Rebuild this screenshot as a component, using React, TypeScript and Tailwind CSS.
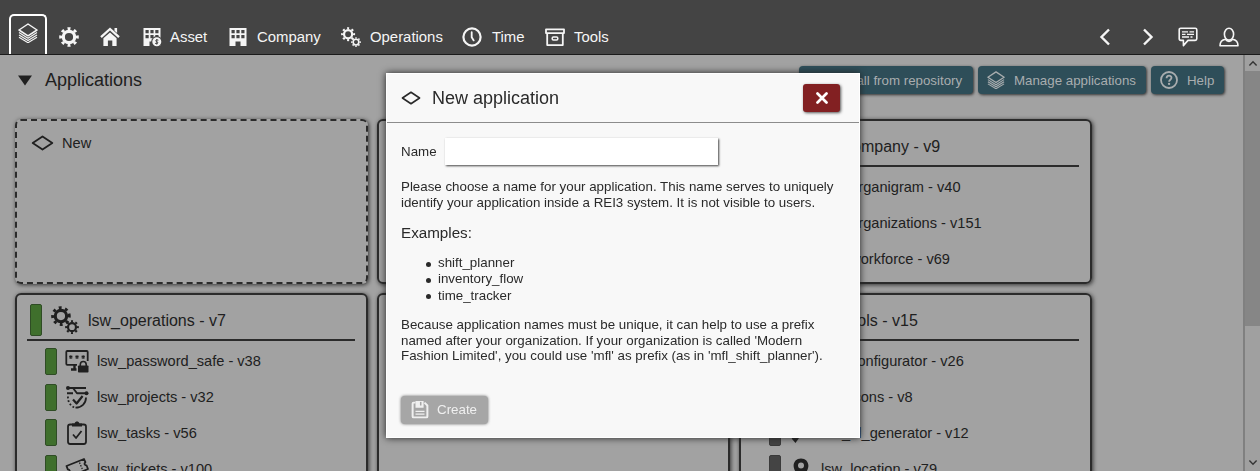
import type { ReactNode } from "react";

type IconProps = { className?: string };

function Svg({ className = "size-5", box = "0 0 20 20", children }: IconProps & { box?: string; children: ReactNode }) {
  return (
    <svg className={`shrink-0 ${className}`} viewBox={box} fill="none" stroke="currentColor" strokeWidth="1.6" strokeLinejoin="round">
      {children}
    </svg>
  );
}

const Layers = ({ className }: IconProps) => (
  <Svg className={className}>
    <path d="M10 1 19 7 10 12.8 1 7Z" strokeWidth="1.5" />
    <path d="M1 9.6 10 15.200l9-5.600M1 12 10 17.500l9-5.500M1 14.300 10 19.700l9-5.400" strokeWidth="1.200" />
  </Svg>
);

function Cog({ x, y, r }: { x: number; y: number; r: number }) {
  const tooth = (2 * Math.PI * r * 0.88) / 16;
  return (
    <g>
      <circle cx={x} cy={y} r={r * 0.58} strokeWidth={r * 0.32} />
      <circle cx={x} cy={y} r={r * 0.85} strokeWidth={r * 0.3} pathLength={tooth * 16} strokeDasharray={`${tooth * 0.9} ${tooth * 1.1}`} strokeDashoffset={tooth * 0.45} />
    </g>
  );
}

const Gear = ({ className }: IconProps) => (
  <Svg className={className}>
    <Cog x={10} y={10} r={9.8} />
  </Svg>
);

const Gears = ({ className }: IconProps) => (
  <Svg className={className}>
    <Cog x={7.1} y={7.2} r={7} />
    <Cog x={15} y={15.1} r={4.9} />
  </Svg>
);

const Home = () => (
  <Svg>
    <path d="M1 10.2 10 2l9 8.2" strokeWidth="2.3" strokeLinejoin="miter" />
    <path d="M14.5 1h2.6v5l-2.6-2.2ZM3.4 11.3 10 5.5l6.6 5.8V19h-4.3v-5.6H7.9V19H3.4Z" fill="currentColor" stroke="none" />
  </Svg>
);

const Building = ({ coin = false }: { coin?: boolean }) => (
  <Svg>
    <path
      fillRule="evenodd"
      d="M1.500 1h17v18h-6v-4.500h-5V19h-6ZM3.500 3v3.300h3.200V3Zm4.900 0v3.300h3.200V3Zm4.900 0v3.300h3.200V3ZM3.500 8v3.300h3.200V8Zm4.900 0v3.300h3.200V8Zm4.900 0v3.300h3.200V8Z"
      fill="currentColor"
      stroke="none"
    />
    {coin && (
      <g>
        <circle cx="14.8" cy="14.6" r="5.6" fill="#444444" stroke="none" />
        <circle cx="14.8" cy="14.8" r="4.5" fill="currentColor" stroke="none" />
        <path d="M16.4 13.2c-2.6-1-3.7.9-1.6 1.6s1.100 2.500-1.700 1.500M14.8 12v5.600" stroke="#444444" strokeWidth="1" />
      </g>
    )}
  </Svg>
);

const Clock = () => (
  <Svg>
    <circle cx="10" cy="10" r="8.6" strokeWidth="2.2" />
    <path d="M9.700 5.200v5l2 3.200" strokeWidth="1.800" strokeLinecap="round" />
  </Svg>
);

const Archive = () => (
  <Svg>
    <path d="M1 2.300h18v3.800H1ZM2.200 6.300v11.800h15.600V6.300" strokeWidth="1.800" />
    <rect x="7.200" y="10" width="5.600" height="2.900" rx="1.200" strokeWidth="1.500" />
  </Svg>
);

const Chat = () => (
  <Svg>
    <path d="M2.800 1.200h14.400q1.600 0 1.600 1.600v9q0 1.600-1.600 1.600H10l-4.600 5.200v-5.200H2.800q-1.600 0-1.600-1.600v-9q0-1.600 1.600-1.600Z" />
    <path d="M4 4.800h6M11.500 4.800H16M4 7.400h3.500M9 7.400h7M4 10h7M12.500 10h2" strokeWidth="1.300" />
  </Svg>
);

const User = () => (
  <Svg>
    <ellipse cx="10" cy="7.200" rx="4.600" ry="5.900" />
    <path d="M6.500 12.300C2.500 13 1 15 1 18.800h18c0-3.800-1.500-5.800-5.500-6.500-1.800 2.800-5.200 2.800-7 0Z" />
  </Svg>
);

const Diamond = ({ className }: IconProps) => (
  <Svg className={className} box="0 0 22 16">
    <path d="M1.200 8 11 1.400 20.800 8 11 14.600Z" strokeWidth="1.800" />
  </Svg>
);

const Help = () => (
  <Svg className="size-[18px]">
    <circle cx="10" cy="10" r="8.900" strokeWidth="2" />
    <path d="M7.300 8c0-3.800 5.500-3.600 5.500-.4 0 2-2.700 2.200-2.700 4.300" strokeWidth="2" />
    <circle cx="10.100" cy="14.300" r="1.300" fill="currentColor" stroke="none" />
  </Svg>
);

const PasswordSafe = () => (
  <Svg className="size-6" box="0 0 24 24">
    <path d="M12 15.800H2.300q-1 0-1-1V3q0-1 1-1h19.400q1 0 1 1v9" strokeWidth="1.800" />
    <path d="M5.800 7.200v3.600M4.200 8.100l3.200 1.800M7.400 8.100 4.200 9.900M12 7.200v3.600M10.400 8.100l3.200 1.800M13.600 8.100l-3.200 1.800M18.200 7.200v3.600M16.600 8.100l3.200 1.800M19.800 8.100l-3.200 1.800" strokeWidth="1.100" transform="translate(0 -1)" />
    <path d="M6 20.500h5.500M9.500 16v4" strokeWidth="2.400" />
    <rect x="13" y="16.500" width="10.500" height="7" rx=".800" fill="currentColor" stroke="none" />
    <path d="M15.300 17v-1.500c0-4 5.900-4 5.900 0V17" strokeWidth="1.600" />
  </Svg>
);

const Projects = () => (
  <Svg className="size-6" box="0 0 24 24">
    <circle cx="3" cy="3" r="2" fill="currentColor" stroke="none" />
    <circle cx="21.500" cy="8.300" r="2" fill="currentColor" stroke="none" />
    <path d="M3 3h18M8 3l4 5.300h9.500M2 8.300h6" strokeWidth="1.900" />
    <path d="M8 14.500l3.600 4 6-7.500" strokeWidth="2.200" />
    <path d="M21 12.500c0 6-4.500 10.200-10.500 10.200" strokeWidth="1.800" />
    <path d="M3 11.500c-.5 5 2.500 9.800 7 11" strokeWidth="1.800" strokeDasharray="1.800 2" />
  </Svg>
);

const Tasks = () => (
  <Svg className="size-6" box="0 0 24 24">
    <rect x="3" y="3.500" width="18" height="19.500" rx="2.200" strokeWidth="1.800" />
    <path d="M7 5.500v-3h2.600c.7-2.600 4.100-2.600 4.800 0H17v3Z" fill="currentColor" stroke="none" />
    <path d="M8 13.500l3 3.500 5.500-7" strokeWidth="1.800" />
  </Svg>
);

const Ticket = () => (
  <Svg className="size-6" box="0 0 24 24">
    <path d="M1.500 9 19 2l1.400 3.200c-1.500 1.200-1 3.200 1.200 3.300L23 12 5.500 19.500 4 16c1.500-1.500.8-3.500-1.200-3.600Z" strokeWidth="1.800" />
    <path d="M14.500 5.500l3 7" strokeWidth="1.300" strokeDasharray="1.500 1.300" />
  </Svg>
);

const Pin = () => (
  <Svg className="size-6" box="0 0 24 24">
    <path fillRule="evenodd" d="M12 1.500c-4.500 0-7.400 3.200-7.400 7.200C4.600 14 12 23.500 12 23.500S19.400 14 19.400 8.700c0-4-2.900-7.200-7.400-7.200Zm0 4a3 3 0 1 1 0 6 3 3 0 0 1 0-6Z" fill="currentColor" stroke="none" />
  </Svg>
);

const Brush = () => (
  <Svg className="size-6" box="0 0 24 24">
    <path d="M2 14h7l1 3-3.500 5L3 18Z" fill="currentColor" stroke="none" />
  </Svg>
);

const Save = () => (
  <Svg className="size-[18px]">
    <path d="M5 1.800H2.800q-1 0-1 1v14.400q0 1 1 1h14.400q1 0 1-1V5L15 1.800" strokeWidth="2.200" />
    <path d="M5 0h9v7.500H5Z" fill="currentColor" stroke="none" />
    <path d="M10.800 1v4" stroke="#a6a6a6" strokeWidth="1.700" />
    <path d="M5 11.500h10M5 14.500h10" strokeWidth="1.300" />
  </Svg>
);

function Chevron({ d, className }: IconProps & { d: string }) {
  return (
    <Svg className={className}>
      <path d={d} strokeWidth="2.400" strokeLinejoin="miter" />
    </Svg>
  );
}

function TopBar() {
  return (
    <header className="flex h-[55px] shrink-0 items-end border-b border-[#1b1b1b] bg-[#444444] text-[14.900px] text-[#f5f5f5]">
      <div className="ml-[9px] flex h-10 w-[38px] justify-center rounded-t-[5px] border-x-2 border-t-2 border-white pt-[7px]">
        <Layers />
      </div>
      <nav className="flex h-[34px] items-center">
        <Gear className="ml-3 size-5" />
        <span className="ml-[21px] flex"><Home /></span>
        <span className="ml-[22px] flex"><Building coin /></span>
        <span className="ml-2 w-[38px]">Asset</span>
        <span className="ml-5 flex"><Building /></span>
        <span className="ml-[9px] w-[63px]">Company</span>
        <Gears className="ml-[21px] size-5" />
        <span className="ml-[9px] w-[71px]">Operations</span>
        <span className="ml-[21px] flex"><Clock /></span>
        <span className="ml-[10px] w-[31px]">Time</span>
        <span className="ml-[22px] flex"><Archive /></span>
        <span className="ml-[9px]">Tools</span>
      </nav>
      <div className="mr-[21px] ml-auto flex h-[34px] items-center">
        <Chevron d="M14 2.500 6.500 10l7.500 7.500" />
        <Chevron className="ml-[23px] size-5" d="M6 2.500 13.500 10 6 17.500" />
        <span className="ml-5 flex"><Chat /></span>
        <span className="ml-[21px] flex"><User /></span>
      </div>
    </header>
  );
}

function ActionButton({ icon, width, children }: { icon?: ReactNode; width: string; children: ReactNode }) {
  return (
    <button className={`flex h-7 items-center rounded-[4px] bg-[#2e4e59] pl-[9px] text-[13.300px] whitespace-nowrap text-[#a9adaf] shadow-[1px_1px_3px_#333] ${width}`}>
      <span className="flex w-[18px]">{icon}</span>
      <span className="ml-[9px] pt-px">{children}</span>
    </button>
  );
}

type Module = { name: string; icon?: ReactNode };
const cardBase = "rounded-[6px] border-2 border-[#2b2b2b] shadow-[1px_1px_4px_#333]";

function ModuleCard({ title, icon, modules, active }: { title: string; icon?: ReactNode; modules: Module[]; active: boolean }) {
  const bar = active ? "bg-[#3f6f2c] border-[#2f4c25]" : "bg-[#444444] border-[#3a3a3a]";
  return (
    <section className={`overflow-hidden pl-[10px] pr-[11px] pt-[3px] ${cardBase}`}>
      <div className="flex h-[43px] items-center border-b-2 border-[#2b2b2b] pl-[3px] pt-[3px]">
        <span className={`h-8 w-3 rounded-[2px] border ${bar}`} />
        <span className="ml-[9px] flex w-[28px]">{icon}</span>
        <h2 className="ml-[9px] pt-[2px] text-[16px] whitespace-nowrap">{title}</h2>
      </div>
      <ul className="flex flex-col pt-[2.500px]">
        {modules.map((m) => (
          <li key={m.name} className="flex h-[35.800px] items-center pl-[18px]">
            <span className={`h-[27px] w-3 rounded-[2px] border ${bar}`} />
            <span className="ml-[8px] flex w-6">{m.icon}</span>
            <span className="ml-2 pt-[2px] text-[14.600px] whitespace-nowrap">{m.name}</span>
          </li>
        ))}
      </ul>
    </section>
  );
}

function Builder() {
  return (
    <main className="min-w-0 flex-1 overflow-hidden">
      <div className="flex h-[50px] items-center pl-[17px]">
        <svg className="h-[11px] w-4" viewBox="0 0 16 11"><path d="M1 .5h14L8 10.500Z" fill="#202020" /></svg>
        <h1 className="ml-3 text-[18px]">Applications</h1>
        <div className="mr-[19px] ml-auto flex gap-[5px]">
          <ActionButton width="w-[174px]">Install from repository</ActionButton>
          <ActionButton width="w-[168px]" icon={<Layers className="size-[18px]" />}>Manage applications</ActionButton>
          <ActionButton width="w-[73px]" icon={<Help />}>Help</ActionButton>
        </div>
      </div>
      <div className="grid grid-cols-[353px_353px_353px] grid-rows-[165px_200px] gap-[9px] pt-[14px] pl-[15px]">
        <section className={`flex border-dashed pt-[12px] pl-[14px] ${cardBase}`}>
          <Diamond className="mt-0.5 h-4 w-[23px]" />
          <span className="ml-2 text-[14.600px] leading-5">New</span>
        </section>
        <section className={cardBase} />
        <ModuleCard active={false} title="lsw_company - v9" modules={[{ name: "lsw_organigram - v40" }, { name: "lsw_organizations - v151" }, { name: "lsw_workforce - v69" }]} />
        <ModuleCard
          active
          title="lsw_operations - v7"
          icon={<Gears className="size-[28px]" />}
          modules={[
            { name: "lsw_password_safe - v38", icon: <PasswordSafe /> },
            { name: "lsw_projects - v32", icon: <Projects /> },
            { name: "lsw_tasks - v56", icon: <Tasks /> },
            { name: "lsw_tickets - v100", icon: <Ticket /> },
          ]}
        />
        <section className={cardBase} />
        <ModuleCard
          active={false}
          title="lsw_tools - v15"
          modules={[
            { name: "lsw_configurator - v26" },
            { name: "lsw_icons - v8" },
            { name: "lsw_dl_generator - v12", icon: <Brush /> },
            { name: "lsw_location - v79", icon: <Pin /> },
          ]}
        />
      </div>
    </main>
  );
}

function ScrollBar() {
  return (
    <aside className="flex w-[17px] flex-col items-center border-l-2 border-[#808080] bg-[#a0a0a0] text-[#353535]">
      <Chevron className="my-[2px] size-3" d="M4 14 10 8l6 6" />
      <div className="h-[255px] w-full bg-[#868686]" />
      <Chevron className="mt-auto mb-[2px] size-3" d="M4 6l6 6 6-6" />
    </aside>
  );
}

function NewApplicationDialog() {
  return (
    <div className="fixed inset-0 flex items-start pt-[73px] pl-[386px]">
      <div role="dialog" className="flex h-[365px] w-[474px] flex-col border border-white bg-[#f8f8f8] text-[13.330px] leading-4 text-[#2a2a2a] shadow-[0_0_7px_#222]">
        <div className="flex h-[49px] items-center border-b border-[#8c8c8c] pr-[19px] pl-[14px]">
          <Diamond className="h-[14px] w-[20px]" />
          <h2 className="ml-[11px] text-[18px]">New application</h2>
          <button aria-label="Close" className="ml-auto flex h-[28px] w-[37px] items-center justify-center rounded-[3px] bg-[#822022] text-white shadow-[1px_1px_3px_#555]">
            <svg className="size-3" viewBox="0 0 12 12"><path d="m1.500 1.500 9 9m0-9-9 9" stroke="currentColor" strokeWidth="2.700" strokeLinecap="round" /></svg>
          </button>
        </div>
        <div className="flex flex-1 flex-col items-start px-[14px] pt-[15px]">
          <label className="flex items-center">
            <span className="w-11">Name</span>
            <input className="h-[27px] w-[273px] bg-white shadow-[1px_1px_2px_#444] outline-none" />
          </label>
          <p className="mt-[14px] whitespace-nowrap">
            Please choose a name for your application. This name serves to uniquely<br />identify your application inside a REI3 system. It is not visible to users.
          </p>
          <h3 className="mt-[14px] text-[15.200px]">Examples:</h3>
          <ul className="mt-[14px] pl-6 leading-[16.300px]">
            {["shift_planner", "inventory_flow", "time_tracker"].map((name) => (
              <li key={name} className="flex items-center">
                <span className="mt-0.5 mr-[7px] ml-px size-[5px] rounded-full bg-[#2a2a2a]" />
                {name}
              </li>
            ))}
          </ul>
          <p className="mt-[13px] leading-[15.800px] whitespace-nowrap">
            Because application names must be unique, it can help to use a prefix<br />named after your organization. If your organization is called 'Modern<br />Fashion Limited', you could use 'mfl' as prefix (as in 'mfl_shift_planner').
          </p>
          <button disabled className="mt-auto mb-[13px] flex h-[28px] w-[87px] items-center rounded-[4px] bg-[#a6a6a6] pl-[10px] text-[#f0f0f0] shadow-[0_0_3px_#666]">
            <Save />
            <span className="ml-2">Create</span>
          </button>
        </div>
      </div>
    </div>
  );
}

export default function App() {
  return (
    <div className="flex h-[471px] w-[1260px] flex-col overflow-hidden bg-[#a2a2a2] font-['Liberation_Sans',Arial,sans-serif] text-[#202020]">
      <TopBar />
      <div className="flex min-h-0 flex-1">
        <Builder />
        <ScrollBar />
      </div>
      <NewApplicationDialog />
    </div>
  );
}
